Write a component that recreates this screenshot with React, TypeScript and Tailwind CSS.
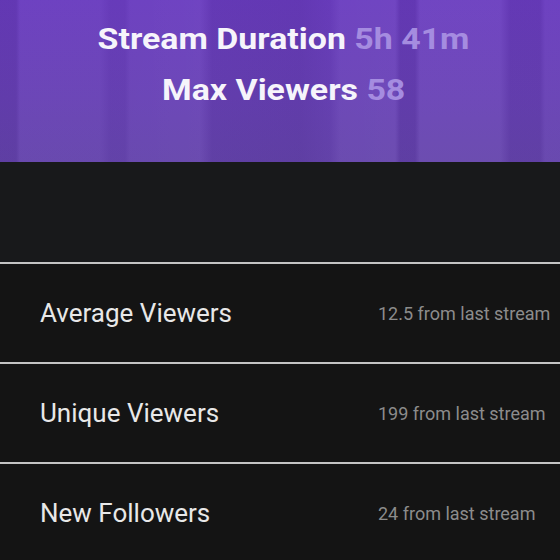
const rows = [
  { label: "Average Viewers", delta: "12.5 from last stream" },
  { label: "Unique Viewers", delta: "199 from last stream" },
  { label: "New Followers", delta: "24 from last stream" },
];

export default function App() {
  return (
    <div className="w-[560px] h-[560px] overflow-hidden bg-[#141414] font-['Roboto',sans-serif]">
      {/* purple banner with soft vertical streaks */}
      <div className="h-[162px] bg-[linear-gradient(180deg,#6b3ec0_0%,#6943b6_60%,#6646ad_100%)]">
        <div className="h-full bg-[linear-gradient(90deg,rgba(40,10,90,0.12)_0px,rgba(40,10,90,0.12)_16px,rgba(255,255,255,0.02)_20px,rgba(255,255,255,0.02)_100px,rgba(40,10,90,0.06)_110px,rgba(40,10,90,0.06)_125px,rgba(255,255,255,0.02)_130px,rgba(255,255,255,0.03)_200px,rgba(40,10,90,0.1)_212px,rgba(40,10,90,0.12)_300px,rgba(40,10,90,0.06)_330px,rgba(255,255,255,0.03)_340px,rgba(255,255,255,0.04)_395px,rgba(40,10,90,0.12)_400px,rgba(40,10,90,0.12)_415px,rgba(255,255,255,0.04)_420px,rgba(255,255,255,0.04)_500px,rgba(40,10,90,0.1)_510px,rgba(40,10,90,0.1)_540px,rgba(255,255,255,0.02)_545px)]">
          <div className="h-full flex flex-col items-center pt-[16px] pl-[8px] gap-[5px]">
            <div className="text-[30px] leading-[46px] font-bold text-[#f6f4fb] scale-x-[1.13]">
              Stream Duration <span className="text-[#a58ce0]">5h 41m</span>
            </div>
            <div className="text-[30px] leading-[46px] font-bold text-[#f6f4fb] scale-x-[1.13]">
              Max Viewers <span className="text-[#a58ce0]">58</span>
            </div>
          </div>
        </div>
      </div>
      <div className="h-[100px] bg-[#18191b]" />
      {rows.map((r) => (
        <div key={r.label}>
          <div className="h-[2px] bg-[#c4c4c4]" />
          <div className="h-[98px] flex items-center">
            <div className="w-[378px] pl-[40px] text-[26px] text-[#e8e8e8]">{r.label}</div>
            <div className="text-[18px] text-[#8c8c8c]">{r.delta}</div>
          </div>
        </div>
      ))}
    </div>
  );
}
